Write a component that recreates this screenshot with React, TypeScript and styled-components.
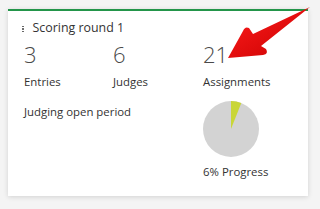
import React from 'react';
import styled, { createGlobalStyle } from 'styled-components';

const GlobalStyle = createGlobalStyle`
  body {
    margin: 0;
    background: #f4f4f4;
    font-family: 'Open Sans', 'Liberation Sans', sans-serif;
    color: #333;
  }
`;

const Page = styled.div`
  width: 320px;
  height: 209px;
  padding: 9px 0 0 8px;
  box-sizing: border-box;
  position: relative;
  overflow: hidden;
`;

const Card = styled.div`
  width: 300px;
  height: 187px;
  box-sizing: border-box;
  background: #fff;
  border-top: 2px solid #23954a;
  box-shadow: 0 1px 5px rgba(0, 0, 0, 0.14);
  padding: 6px 16px 0 16px;
`;

const Header = styled.div`
  display: flex;
  align-items: center;
  gap: 9px;
  height: 20px;
  font-size: 12.4px;
  color: #333;
`;

const Kebab = styled.span`
  display: flex;
  flex-direction: column;
  gap: 1px;
  margin-top: 4px;
  margin-left: -2px;

  i {
    width: 1.5px;
    height: 1.5px;
    background: #555;
    border-radius: 50%;
  }
`;

const Grid = styled.div`
  display: grid;
  grid-template-columns: 89px 90px 1fr;
  margin-top: 5px;
`;

const Stat = styled.div`
  display: flex;
  flex-direction: column;
`;

const Number = styled.div`
  font-size: 22px;
  font-weight: 300;
  line-height: 24px;
  color: #4a4a4a;
`;

const Label = styled.div`
  font-size: 11.4px;
  line-height: 16px;
  margin-top: 8px;
  color: #333;
`;

const Period = styled.div`
  font-size: 11.4px;
  line-height: 16px;
  margin-top: 14px;
  grid-column: 1 / span 2;
`;

const ProgressCell = styled.div`
  display: flex;
  flex-direction: column;
  align-items: flex-start;
  margin-top: 11px;
`;

const ProgressLabel = styled.div`
  font-size: 11.4px;
  line-height: 16px;
  margin-top: 7px;
`;

const Arrow = styled.svg`
  position: absolute;
  left: 0;
  top: 0;
  pointer-events: none;
`;

function Pie({ percent }: { percent: number }) {
  const r = 28;
  const a = (percent / 100) * Math.PI * 2;
  const x = r + r * Math.sin(a);
  const y = r - r * Math.cos(a);
  return (
    <svg width={56} height={56} viewBox="0 0 56 56">
      <circle cx={r} cy={r} r={r} fill="#d3d3d3" />
      <path d={`M${r} ${r} L${r} 0 A${r} ${r} 0 0 1 ${x} ${y} Z`} fill="#c9d638" />
    </svg>
  );
}

export default function App() {
  return (
    <>
      <GlobalStyle />
      <Page>
        <Card>
          <Header>
            <Kebab>
              <i />
              <i />
              <i />
            </Kebab>
            Scoring round 1
          </Header>
          <Grid>
            <Stat>
              <Number>3</Number>
              <Label>Entries</Label>
            </Stat>
            <Stat>
              <Number>6</Number>
              <Label>Judges</Label>
            </Stat>
            <Stat>
              <Number>21</Number>
              <Label>Assignments</Label>
            </Stat>
            <Period>Judging open period</Period>
            <ProgressCell>
              <Pie percent={6} />
              <ProgressLabel>6% Progress</ProgressLabel>
            </ProgressCell>
          </Grid>
        </Card>
        <Arrow width={320} height={209} viewBox="0 0 320 209">
          <defs>
            <linearGradient id="arrowRed" x1="0" y1="0" x2="1" y2="1">
              <stop offset="0" stopColor="#ff1d1d" />
              <stop offset="1" stopColor="#c80000" />
            </linearGradient>
          </defs>
          <path
            d="M228 58 L243 31 Q245 26 249 28 L253 34 L310 7 L261 46 L266 49 Q269 54 263 55 Z"
            fill="url(#arrowRed)"
          />
        </Arrow>
      </Page>
    </>
  );
}
